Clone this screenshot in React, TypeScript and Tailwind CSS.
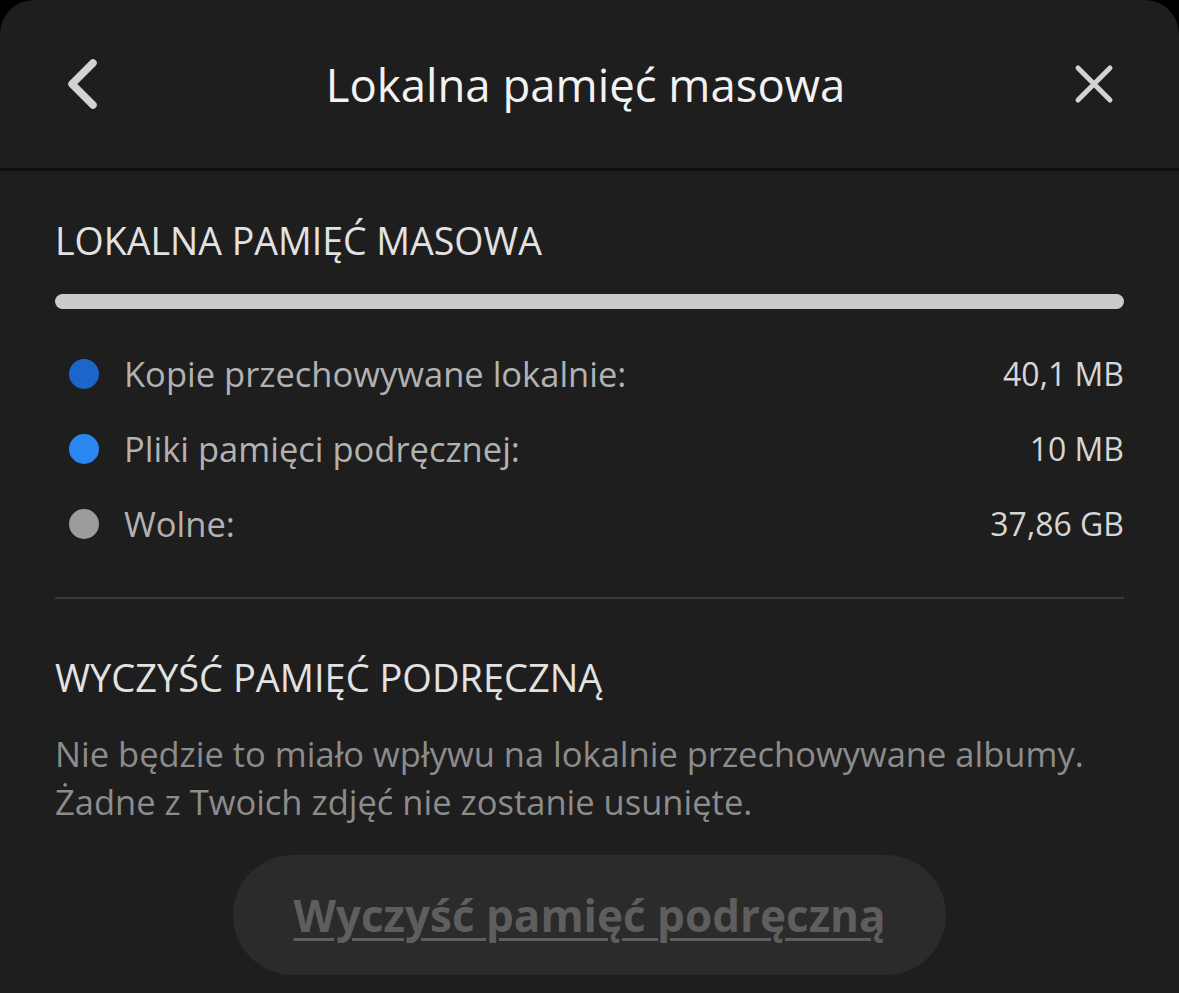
type Row = {
  label: string;
  value: string;
  dot: string;
};

const rows: Row[] = [
  { label: 'Kopie przechowywane lokalnie:', value: '40,1 MB', dot: 'bg-[#1b67c9]' },
  { label: 'Pliki pamięci podręcznej:', value: '10 MB', dot: 'bg-[#2c86ef]' },
  { label: 'Wolne:', value: '37,86 GB', dot: 'bg-[#9b9c9d]' },
];

export default function App() {
  return (
    <div className="w-full h-[993px] bg-black overflow-hidden font-['Open_Sans',sans-serif]">
      <div className="h-full bg-[#1e1e1e] rounded-t-[34px] flex flex-col">
        {/* header */}
        <div className="h-[168px] flex items-center justify-between pl-[62px] pr-[60px] shrink-0">
          <button className="w-[40px] h-[56px] flex items-center justify-center">
            <svg width="34" height="54" viewBox="0 0 34 54" fill="none">
              <polyline points="28,6 7,27 28,48" stroke="#d2d2d2" strokeWidth="7.5" strokeLinecap="round" strokeLinejoin="round" />
            </svg>
          </button>
          <h1 className="text-[45.5px] font-medium text-[#f2f2f2]">Lokalna pamięć masowa</h1>
          <button className="w-[50px] h-[50px] flex items-center justify-center">
            <svg width="40" height="40" viewBox="0 0 40 40" fill="none">
              <path d="M4 4 L36 36 M36 4 L4 36" stroke="#d2d2d2" strokeWidth="5" strokeLinecap="round" />
            </svg>
          </button>
        </div>
        <div className="h-[3px] bg-[#0f0f0f] shrink-0" />

        <div className="px-[55px] pt-[48px]">
          <h2 className="text-[37.5px] leading-[44px] text-[#e2e2e2] uppercase">Lokalna pamięć masowa</h2>
          <div className="mt-[31px] h-[15px] rounded-full bg-[#cbcbcb]" />

          <div className="mt-[27px] flex flex-col">
            {rows.map((row) => (
              <div key={row.label} className="h-[75px] flex items-center justify-between">
                <div className="flex items-center gap-[25px] pl-[14px]">
                  <span className={`w-[30px] h-[30px] rounded-full ${row.dot}`} />
                  <span className="text-[34.5px] text-[#b2b2b2]">{row.label}</span>
                </div>
                <span className="text-[32px] text-[#d6d6d6]">{row.value}</span>
              </div>
            ))}
          </div>

          <div className="mt-[36px] h-[2px] bg-[#3a3a3a]" />

          <h2 className="mt-[56px] text-[38px] leading-[44px] text-[#e2e2e2] uppercase">Wyczyść pamięć podręczną</h2>
          <p className="mt-[31px] text-[34.5px] leading-[48px] text-[#8c8c8c]">
            Nie będzie to miało wpływu na lokalnie przechowywane albumy.
            <br />
            Żadne z Twoich zdjęć nie zostanie usunięte.
          </p>

          <div className="mt-[29px] flex justify-center">
            <button className="w-[713px] h-[120px] rounded-full bg-[#2b2b2b] text-[44px] leading-[56px] font-bold text-[#5e5e5e] underline underline-offset-[6px] decoration-[3px]">
              Wyczyść pamięć podręczną
            </button>
          </div>
        </div>
      </div>
    </div>
  );
}
